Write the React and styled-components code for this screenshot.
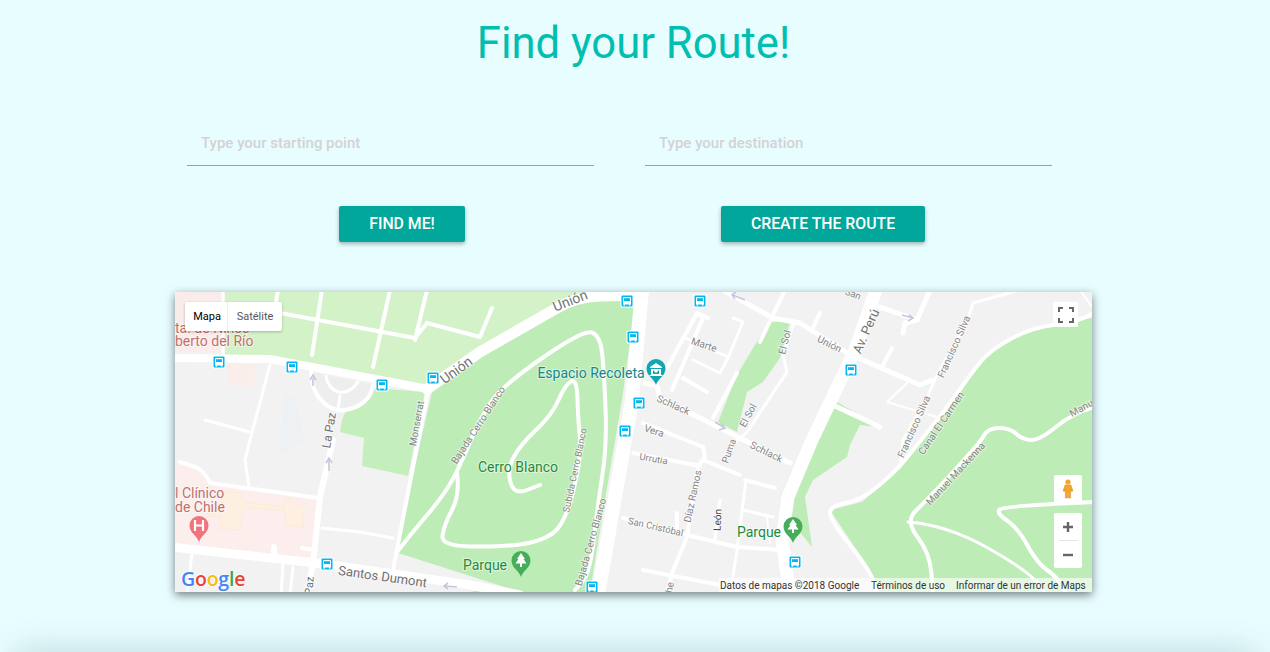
import React from "react";
import styled, { createGlobalStyle } from "styled-components";

const GlobalStyle = createGlobalStyle`
  html, body {
    margin: 0;
    height: 652px;
    overflow: hidden;
    background: #e8fdff;
    font-family: Roboto, "Liberation Sans", sans-serif;
  }
  * { box-sizing: border-box; }
`;

const Page = styled.div`
  height: 652px;
  overflow: hidden;
  display: flex;
  flex-direction: column;
  align-items: flex-start;
`;
const Content = styled.main`
  width: 917px;
  margin-left: 175px;
  display: flex;
  flex-direction: column;
`;
const Title = styled.h1`
  margin: 0;
  height: 120px;
  padding-top: 15px;
  font-size: 43.6px;
  line-height: 58px;
  font-weight: 400;
  color: #00bfb0;
  text-align: center;
`;
const InputRow = styled.div`
  display: flex;
  gap: 51px;
  padding-left: 12px;
`;
const RouteInput = styled.input`
  width: 407px;
  height: 46px;
  padding: 0 14px 0;
  border: none;
  border-bottom: 1px solid #9e9e9e;
  background: transparent;
  font-family: Roboto, sans-serif;
  font-size: 15px;
  font-weight: 500;
  outline: none;
  &::placeholder { color: #d3d3d3; opacity: 1; }
`;
const ButtonRow = styled.div`
  display: flex;
  justify-content: center;
  gap: 256px;
  margin-top: 40px;
  padding-right: 3px;
`;
const ActionButton = styled.button`
  height: 36px;
  width: ${(p) => p.$w}px;
  padding: 0 0 1px;
  border: none;
  border-radius: 2px;
  background: #00a79a;
  color: #fff;
  font-family: Roboto, sans-serif;
  font-size: 15.8px;
  font-weight: 500;
  box-shadow: 0 2px 4px rgba(0, 0, 0, 0.3);
`;
const MapFrame = styled.section`
  position: relative;
  height: 300px;
  margin-top: 50px;
  box-shadow: 0 3px 9px rgba(0, 0, 0, 0.5);
`;
const MapDrawing = styled.svg`
  display: block;
  width: 917px;
  height: 300px;
  font-family: Roboto, sans-serif;
`;
const RoadLayer = styled.g`
  filter: blur(0.35px);
`;
const Road = styled.path`
  fill: none;
  stroke: #fff;
  stroke-width: ${(p) => p.$w};
  stroke-linecap: round;
  stroke-linejoin: round;
`;
const MapLabel = styled.text`
  font-size: ${(p) => p.$size}px;
  fill: ${(p) => p.$color};
  stroke: rgba(255, 255, 255, 0.5);
  stroke-width: 2px;
  paint-order: stroke;
  text-anchor: ${(p) => p.$anchor};
`;
const MapType = styled.div`
  position: absolute;
  left: 10px;
  top: 10px;
  display: flex;
  height: 29px;
  background: #fff;
  border-radius: 2px;
  box-shadow: 0 1px 3px rgba(0, 0, 0, 0.25);
`;
const MapTypeTab = styled.div`
  display: flex;
  align-items: center;
  justify-content: center;
  width: ${(p) => p.$w}px;
  padding-left: ${(p) => (p.$active ? 2 : 0)}px;
  font-size: 11px;
  color: ${(p) => (p.$active ? "#000" : "#565656")};
  border-right: ${(p) => (p.$active ? "1px solid #eee" : "none")};
`;
const FullscreenButton = styled.div`
  position: absolute;
  right: 14px;
  top: 10px;
  width: 25px;
  height: 25px;
  display: flex;
  align-items: center;
  justify-content: center;
  background: #fff;
`;
const PegmanButton = styled.div`
  position: absolute;
  right: 10px;
  top: 183px;
  width: 28px;
  height: 28px;
  display: flex;
  align-items: center;
  justify-content: center;
  background: #fff;
  border-radius: 2px;
`;
const ZoomBox = styled.div`
  position: absolute;
  right: 10px;
  top: 221px;
  width: 28px;
  height: 55px;
  display: flex;
  flex-direction: column;
  align-items: center;
  background: #fff;
  border-radius: 2px;
`;
const ZoomKey = styled.div`
  width: 100%;
  height: 27px;
  display: flex;
  align-items: center;
  justify-content: center;
`;
const ZoomRule = styled.div`
  width: 19px;
  height: 1px;
  background: #e6e6e6;
`;
const Attribution = styled.div`
  position: absolute;
  right: 0;
  bottom: 0;
  width: 373px;
  height: 14px;
  display: flex;
  align-items: center;
  padding-left: 1px;
  background: rgba(255, 255, 255, 0.62);
  font-size: 10px;
  color: #333;
  white-space: nowrap;
`;
const AttributionItem = styled.span`
  width: ${(p) => p.$w}px;
`;
const GoogleLogo = styled.div`
  position: absolute;
  left: 6px;
  bottom: 0;
  height: 26px;
  font-family: "Open Sans", Roboto, sans-serif;
  font-size: 19.5px;
  line-height: 26px;
  font-weight: 600;
  letter-spacing: -0.2px;
  text-shadow: 0 0 2px #fff, 0 0 2px #fff;
`;
const LogoLetter = styled.span`
  color: ${(p) => p.$color};
`;
const BottomEdge = styled.div`
  width: 1240px;
  height: 40px;
  margin: 60px 0 0 15px;
  flex-shrink: 0;
  box-shadow: 0 0 34px rgba(0, 70, 80, 0.2);
`;

// rounds a hand traced polyline, for the winding park roads
function curve(points) {
  const mid = (a, b) => [(a[0] + b[0]) / 2, (a[1] + b[1]) / 2];
  let d = `M${points[0][0]} ${points[0][1]}`;
  for (let i = 1; i < points.length - 1; i++) {
    const m = mid(points[i], points[i + 1]);
    d += ` Q${points[i][0]} ${points[i][1]} ${m[0]} ${m[1]}`;
  }
  const last = points[points.length - 1];
  return `${d} L${last[0]} ${last[1]}`;
}

const roads = [
  // union + santos dumont + avenues
  [8, "M170 358 L270 359 L423 388"],
  [11, "M427 389 L480 352 L557 308 Q575 297 600 296 L640 295"],
  [14, "M642 290 L632 400 L618 480 L598 595"],
  [9, "M170 547 L317 563 L470 585 L520 595"],
  [6, "M333 440 L320 497 L313 563 L307 595"],
  [13, "M876 290 L855 350 L812 440 L788 497 L782 540 L790 595"],
  [4, "M428 390 L392 575"],
  // west side
  [3, "M223 290 L223 356"],
  [3, "M270 365 L250 440 L245 460 L249 487"],
  [3, "M205 420 L250 432"],
  [4, "M180 462 L198 468 Q206 474 210 483 L318 498"],
  [3, "M322 528 L360 532 L393 538"],
  [3, "M192 553 L187 595"],
  [3, "M283 565 L281 595"],
  [3, "M293 567 L290 595"],
  [6, "M274 555 L274 547"],
  [4, "M302 548 L313 550"],
  // top park paths
  [4, "M280 313 L415 338 L427 323 L480 337 L492 308"],
  [4, "M278 290 L276 302"],
  [4, "M322 290 L312 355"],
  [4, "M390 290 L373 367"],
  [4, "M427 290 L415 340"],
  // roundabout
  [4, "M311 372 C311 398 330 412 345 410 C360 408 372 398 373 385"],
  [3, "M326 376 C328 392 345 400 358 382"],
  [3, "M340 396 L338 410"],
  // cerro blanco
  [4, curve([[397, 552], [410, 535], [440, 500], [457, 473], [480, 418], [503, 385], [583, 330], [600, 335], [604, 370], [607, 445], [598, 503], [590, 573], [575, 590]])],
  [4, curve([[457, 473], [460, 495], [444, 525], [441, 546], [500, 547], [540, 542], [565, 525], [582, 455], [578, 420], [577, 378], [565, 385], [552, 415], [520, 445], [507, 470], [514, 495], [540, 485]])],
  // recoleta blocks
  [5, "M645 383 L657 386 L660 398 L740 438 L790 463"],
  [4, "M667 368 L697 313 L703 318 L672 390"],
  [4, "M697 313 L708 318"],
  [3, "M733 318 L743 322 L728 358 L720 373 L693 360"],
  [3, "M683 337 L728 357"],
  [4, "M683 378 L707 392"],
  [4, "M713 418 L737 373"],
  [5, "M723 290 L773 318 L800 323 L847 353 L920 385 L933 380"],
  [4, "M785 290 L760 342"],
  [3, "M793 325 L783 355 L787 372 L767 402 L747 432 L730 447"],
  [5, "M880 307 L917 320 L930 290"],
  [5, "M917 320 L905 323 L903 333"],
  [4, "M820 313 L812 330"],
  [4, "M892 348 L882 367"],
  [3, "M1020 290 L973 303 L967 322 L937 375 L927 398 L903 440 L900 467"],
  [4, curve([[1095, 312], [1080, 322], [1033, 327], [990, 350], [970, 375], [947, 408], [917, 445], [897, 470], [862, 500], [830, 506], [830, 520], [870, 570], [878, 595]])],
  [2, "M907 383 L887 402 L937 417"],
  [5, "M833 405 L880 427"],
  [2, "M1080 290 L1092 307"],
  // south blocks
  [4, "M633 453 L700 466"],
  [4, "M703 447 L705 457 L698 467 L687 537 L672 573 L667 595"],
  [4, "M703 460 L740 475"],
  [4, "M745 480 L775 488"],
  [3, "M746 480 L737 550 L730 595"],
  [4, "M623 518 L687 535 L737 547 L780 550"],
  [4, "M677 513 L677 530"],
  [3, "M720 500 L715 540"],
  [3, "M743 510 L773 517"],
  [2, "M767 517 L770 543"],
  [4, "M643 570 L720 585"],
  [4, "M643 423 L703 447"],
  // east hill
  [4, curve([[1095, 407], [1073, 413], [1040, 440], [1023, 440], [1010, 428], [988, 428], [980, 443], [927, 500], [905, 521], [930, 553], [933, 595]])],
  [3, curve([[908, 522], [947, 525], [1027, 570], [1047, 595]])],
  [4, curve([[1095, 502], [1003, 506], [996, 513], [1018, 528], [1037, 563], [1057, 577], [1067, 595]])],
];

const labels = [
  ["ta. de Niños", 175, 333, 0, 14, "#c0706c", "start"],
  ["berto del Río", 175, 346, 0, 14, "#c0706c", "start"],
  ["l Clínico", 175, 498, 0, 14, "#c0706c", "start"],
  ["de Chile", 175, 512, 0, 14, "#c0706c", "start"],
  ["Unión", 459, 374, -36, 14, "#6f7478", "middle"],
  ["Unión", 572, 305, -22, 14, "#6f7478", "middle"],
  ["Monserrat", 420, 424, -80, 10, "#858585", "middle"],
  ["La Paz", 333, 431, -80, 12, "#707070", "middle"],
  ["Bajada Cerro Blanco", 481, 427, -57, 10, "#858585", "middle"],
  ["Subida Cerro Blanco", 578, 471, -78, 9.5, "#858585", "middle"],
  ["Bajada Cerro Blanco", 594, 543, -74, 10, "#858585", "middle"],
  ["Cerro Blanco", 518, 472, 0, 14, "#1f8a3c", "middle"],
  ["Parque", 485, 570, 0, 14, "#1f8a3c", "middle"],
  ["Parque", 759, 537, 0, 14, "#1f8a3c", "middle"],
  ["Espacio Recoleta", 591, 378, 0, 14, "#13868f", "middle"],
  ["Santos Dumont", 382, 581, 8, 13, "#707070", "middle"],
  ["Paz", 313, 586, -85, 11, "#707070", "middle"],
  ["Marte", 703, 348, 18, 10, "#858585", "middle"],
  ["Schlack", 672, 408, 24, 10, "#858585", "middle"],
  ["Schlack", 765, 455, 26, 10, "#858585", "middle"],
  ["Vera", 653, 434, 18, 10, "#858585", "middle"],
  ["Urrutia", 653, 462, 10, 9.5, "#858585", "middle"],
  ["El Sol", 788, 343, -76, 10, "#858585", "middle"],
  ["El Sol", 751, 417, -62, 10, "#858585", "middle"],
  ["Puma", 732, 452, -70, 9.5, "#858585", "middle"],
  ["Díaz Ramos", 696, 497, -78, 10, "#858585", "middle"],
  ["León", 721, 520, -88, 10, "#444", "middle"],
  ["San Cristóbal", 655, 530, 13, 9.5, "#858585", "middle"],
  ["Unión", 828, 347, 26, 10, "#858585", "middle"],
  ["Av. Perú", 870, 333, -66, 13, "#707070", "middle"],
  ["Francisco Silva", 957, 348, -66, 10, "#858585", "middle"],
  ["Francisco Silva", 917, 428, -66, 10, "#858585", "middle"],
  ["Canal El Carmen", 944, 425, -56, 10, "#858585", "middle"],
  ["Manuel Mackenna", 958, 476, -47, 10, "#858585", "middle"],
  ["Manu", 1083, 411, -30, 10, "#858585", "middle"],
  ["San", 852, 297, 20, 9.5, "#858585", "middle"],
  ["he", 673, 588, -80, 10, "#858585", "middle"],
];

const busStops = [
  [219, 362], [292, 367], [382, 385], [433, 378], [627, 301], [633, 337],
  [639, 403], [625, 431], [700, 301], [851, 370], [795, 562], [592, 587], [327, 564],
];

function BusStop({ x, y }) {
  return (
    <g transform={`translate(${x} ${y})`}>
      <rect x="-6.5" y="-6.5" width="13" height="13" rx="1.5" fill="#fff" />
      <rect x="-5.5" y="-5.5" width="11" height="11" rx="1" fill="#00b9f2" />
      <rect x="-4" y="-4" width="8" height="7.5" rx="1.2" fill="#fff" />
      <rect x="-3" y="-2.8" width="6" height="2.8" fill="#00b9f2" />
      <rect x="-3.5" y="3" width="1.6" height="1.6" fill="#fff" />
      <rect x="1.9" y="3" width="1.6" height="1.6" fill="#fff" />
    </g>
  );
}

function Pin({ x, y, color, children }) {
  return (
    <g transform={`translate(${x} ${y})`}>
      <path d="M0 0 C-1.5 -6 -9.5 -9 -9.5 -16.5 A9.5 9.5 0 1 1 9.5 -16.5 C9.5 -9 1.5 -6 0 0Z" fill={color} />
      {children}
    </g>
  );
}

function MapArt() {
  return (
    <MapDrawing viewBox="175 292 917 300">
      <rect x="175" y="292" width="917" height="300" fill="#f2f2f2" />
      {/* hospital + misc landuse */}
      <path d="M175 292 H225 V352 H175Z" fill="#f9ecea" />
      <rect x="227" y="363" width="28" height="22" fill="#f9eeea" />
      <path d="M175 464 L196 466 L210 485 L318 499 L313 560 L175 545Z" fill="#fbeeec" />
      <path d="M282 565 H300 L298 592 H282Z M175 549 H190 L186 592 H175Z" fill="#eeeff0" opacity=".5" />
      <path d="M285 395 L295 400 L305 440 L280 455 L280 430Z" fill="#eef1f3" />
      <path d="M222 492 H240 L243 502 L283 507 L288 498 L296 505 L304 506 L303 527 L287 525 L284 510 L243 507 L240 530 L220 529 L221 516 L205 517 L222 505Z" fill="#fdf0e0" stroke="#fdebd6" />
      <path d="M490 588 L540 592 H470Z" fill="#bdecb6" />
      {/* parks */}
      <path d="M225 292 H605 L555 305 L480 350 L427 388 L270 356 L225 355Z" fill="#d4f2c8" />
      <path d="M340 432 L342 420 Q352 395 372 388 L425 392 L408 476 L362 466 L364 438Z" fill="#c4eebc" />
      <path d="M432 392 L480 355 L557 310 L600 297 L636 297 L622 400 L605 500 L590 592 L520 592 L395 552Z" fill="#bdecb6" />
      <path d="M770 322 H790 L780 358 L763 382 L747 392 L737 432 L718 422 L737 375 L753 348Z" fill="#bdecb6" />
      <path d="M837 402 L880 427 L860 425 L850 445 L847 457 L813 480 L805 497 L812 547 L790 520 L787 497 L813 445Z" fill="#bdecb6" />
      <path d="M1092 318 L1033 329 L990 352 L970 377 L947 410 L917 447 L897 472 L862 502 L830 510 L870 570 L878 592 H1092Z" fill="#bdecb6" />
      <path d="M311 372 C311 398 330 412 345 410 C360 408 372 398 373 385Z" fill="#eeeeee" />
      <RoadLayer>
        {roads.map(([w, d], i) => (
          <Road key={i} $w={w} d={d} />
        ))}
      </RoadLayer>
      {/* one-way arrows */}
      <path d="M313 386 V378 M310 380 L313 375 L316 380" fill="none" stroke="#c4c8dc" strokeWidth="1.6" />
      <path d="M329 471 V460 M326 463 L329 458 L332 463" fill="none" stroke="#c4c8dc" strokeWidth="1.6" />
      <path d="M445 586 L457 587 M448 583 L444 586 L448 589" fill="none" stroke="#c4c8dc" strokeWidth="1.6" />
      <path d="M733 295 L745 300 M736 292 L732 295 L735 299" fill="none" stroke="#c4c8dc" strokeWidth="1.6" />
      <path d="M715 422 L725 428 M721 423 L725 428 L719 430" fill="none" stroke="#c4c8dc" strokeWidth="1.6" />
      <path d="M902 315 L913 318 M909 315 L913 318 L908 321" fill="none" stroke="#c4c8dc" strokeWidth="1.6" />
      {labels.map(([text, x, y, angle, size, color, anchor], i) => (
        <MapLabel
          key={i}
          x={x}
          y={y}
          transform={angle ? `rotate(${angle} ${x} ${y})` : undefined}
          $size={size}
          $color={color}
          $anchor={anchor}
        >
          {text}
        </MapLabel>
      ))}
      {busStops.map(([x, y]) => (
        <BusStop key={`${x}-${y}`} x={x} y={y} />
      ))}
      <Pin x={656} y={385} color="#12a5b0">
        <path d="M-6 -18 L0 -22 L6 -18 V-17 H-6Z M-5 -16 H5 V-10 H-5Z M-6.5 -10 H6.5 V-9 H-6.5Z" fill="#fff" />
        <path d="M-3 -15 L0 -12 L3 -15 V-11 H-3Z" fill="#12a5b0" />
      </Pin>
      <Pin x={199} y={542} color="#f0747c">
        <path d="M-4 -22 V-11 M4 -22 V-11 M-4 -16.5 H4" stroke="#fff" strokeWidth="2.2" fill="none" />
      </Pin>
      <Pin x={521} y={577} color="#46ad5b">
        <path d="M0 -24 L4 -18 H2.5 L5.5 -13.5 H1 V-10 H-1 V-13.5 H-5.5 L-2.5 -18 H-4Z" fill="#fff" />
      </Pin>
      <Pin x={793} y={543} color="#46ad5b">
        <path d="M0 -24 L4 -18 H2.5 L5.5 -13.5 H1 V-10 H-1 V-13.5 H-5.5 L-2.5 -18 H-4Z" fill="#fff" />
      </Pin>
    </MapDrawing>
  );
}

export default function App() {
  return (
    <Page>
      <GlobalStyle />
      <Content>
        <Title>Find your Route!</Title>
        <InputRow>
          <RouteInput placeholder="Type your starting point" />
          <RouteInput placeholder="Type your destination" />
        </InputRow>
        <ButtonRow>
          <ActionButton $w={126}>FIND ME!</ActionButton>
          <ActionButton $w={204}>CREATE THE ROUTE</ActionButton>
        </ButtonRow>
        <MapFrame>
          <MapArt />
          <MapType>
            <MapTypeTab $active $w={43}>Mapa</MapTypeTab>
            <MapTypeTab $w={54}>Satélite</MapTypeTab>
          </MapType>
          <FullscreenButton>
            <svg width="16" height="16" viewBox="0 0 16 16">
              <path d="M1 5 V1 H5 M11 1 H15 V5 M15 11 V15 H11 M5 15 H1 V11" fill="none" stroke="#666" strokeWidth="2" />
            </svg>
          </FullscreenButton>
          <PegmanButton>
            <svg width="12" height="20" viewBox="0 0 12 20">
              <circle cx="6" cy="3" r="2.6" fill="#f5a623" />
              <path d="M3 6 H9 L11 12 L9.4 12.6 L8.6 10 V19 H6.4 V13 H5.6 V19 H3.4 V10 L2.6 12.6 L1 12 Z" fill="#f5a623" stroke="#c9851a" strokeWidth=".4" />
            </svg>
          </PegmanButton>
          <ZoomBox>
            <ZoomKey>
              <svg width="12" height="12" viewBox="0 0 12 12">
                <path d="M6 1 V11 M1 6 H11" stroke="#666" strokeWidth="2.4" />
              </svg>
            </ZoomKey>
            <ZoomRule />
            <ZoomKey>
              <svg width="12" height="12" viewBox="0 0 12 12">
                <path d="M1 6 H11" stroke="#666" strokeWidth="2.4" />
              </svg>
            </ZoomKey>
          </ZoomBox>
          <GoogleLogo>
            <LogoLetter $color="#4285f4">G</LogoLetter>
            <LogoLetter $color="#ea4335">o</LogoLetter>
            <LogoLetter $color="#fbbc05">o</LogoLetter>
            <LogoLetter $color="#4285f4">g</LogoLetter>
            <LogoLetter $color="#34a853">l</LogoLetter>
            <LogoLetter $color="#ea4335">e</LogoLetter>
          </GoogleLogo>
          <Attribution>
            <AttributionItem $w={151}>Datos de mapas ©2018 Google</AttributionItem>
            <AttributionItem $w={85}>Términos de uso</AttributionItem>
            <AttributionItem $w={135}>Informar de un error de Maps</AttributionItem>
          </Attribution>
        </MapFrame>
      </Content>
      <BottomEdge />
    </Page>
  );
}
